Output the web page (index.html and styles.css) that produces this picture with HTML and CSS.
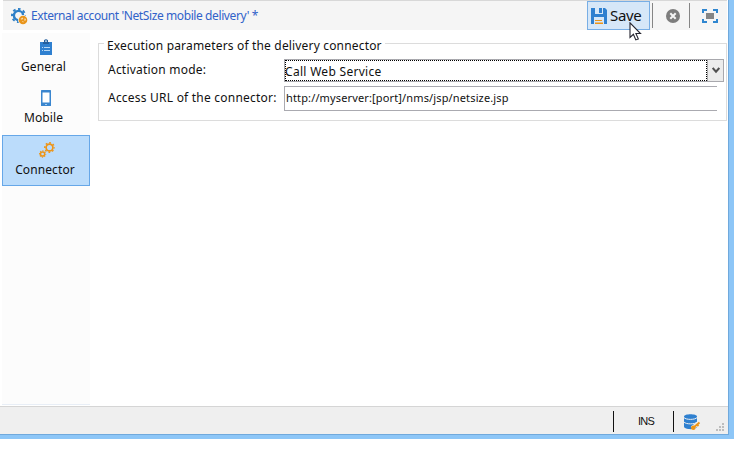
FILE: index.html
```html
<!DOCTYPE html>
<html lang="en">
<head>
<meta charset="utf-8">
<title>External account</title>
<link rel="stylesheet" href="styles.css">
</head>
<body>
<div class="window">
  <header class="toolbar">
    <svg class="account-icon" width="17" height="17" viewBox="0 0 17 17">
      <circle cx="7.500" cy="7.500" r="4.600" fill="none" stroke="#2f80c8" stroke-width="2.400"/>
      <circle cx="7.500" cy="7.500" r="6.500" fill="none" stroke="#2f80c8" stroke-width="2" stroke-dasharray="2.600 2.505" stroke-dashoffset="1.300"/>
      <circle cx="12" cy="12" r="5" fill="#f5f5f5"/>
      <circle cx="12" cy="12" r="4.300" fill="#e8941a"/>
      <path d="M9.500 11l2-1.500.8 1-1.300 1.200zM13.300 10.500l1.500.3v1.500l-1.300.8zM11 13l1.500.3-.3 1.500z" fill="#fbdcae"/>
    </svg>
    <span class="title">External account 'NetSize mobile delivery' *</span>
    <button class="save">
      <svg width="16" height="16" viewBox="0 0 16 16">
        <path d="M0 0h14l2 2v14H0z" fill="#2f80d0"/>
        <path d="M4 0h8v6H4z" fill="#d6e7f8"/><path d="M8 0h3v5H8z" fill="#2f80d0"/>
        <path d="M3 9h10v7H3z" fill="#d6e7f8"/>
        <path d="M4 12h7v1H4zM4 14.500h8v1.500H4z" fill="#ed9518"/>
      </svg>
      <span>Save</span>
    </button>
    <i class="divider first"></i>
    <svg class="close" width="14" height="14" viewBox="0 0 14 14">
      <circle cx="7" cy="7" r="7" fill="#7d7d7d"/>
      <path d="M4.300 4.300l5.400 5.400M9.700 4.300l-5.400 5.400" stroke="#f5f5f5" stroke-width="2"/>
    </svg>
    <i class="divider second"></i>
    <svg class="expand" width="16" height="14" viewBox="0 0 16 14">
      <path d="M1 4V1h4M11 1h4v3M15 10v3h-4M5 13H1v-3" fill="none" stroke="#2f86d0" stroke-width="2"/>
      <path d="M4 4h8v6H4z" fill="#858585"/>
    </svg>
    <svg class="cursor" width="13" height="20" viewBox="0 0 13 20">
      <path d="M1 .8v14.700l3.400-3.200 2.400 5.600 2.500-1-2.400-5.400h4.600z" fill="#fff" stroke="#24242f" stroke-width="1.100"/>
    </svg>
  </header>
  <div class="content">
    <nav class="tabs">
      <div class="tab general">
        <svg width="12" height="16" viewBox="0 0 12 16">
          <path d="M0 3h12v13H0z" fill="#2f80d0"/>
          <path d="M3 5V3h1V1.200Q6-.8 8 1.200V3h1v2z" fill="#245f9d"/>
          <path d="M5 1.500h2v1.300H5z" fill="#c9dff4"/>
          <path d="M2 8h1v1H2zM4 8h6v1H4zM2 11h1v1H2zM4 11h6v1H4z" fill="#b8d8f4"/>
        </svg>
        <span>General</span>
      </div>
      <div class="tab mobile">
        <svg width="10" height="16" viewBox="0 0 10 16">
          <rect width="10" height="16" rx=".5" fill="#3a86cf"/>
          <path d="M1.500 2.500h7v10h-7z" fill="#fff"/><path d="M4 14h2v1H4z" fill="#a9cff0"/>
        </svg>
        <span>Mobile</span>
      </div>
      <div class="tab connector">
        <svg width="16" height="16" viewBox="0 0 16 16" fill="none" stroke="#ed9518">
          <circle cx="10.500" cy="5.500" r="3.400" stroke-width="1.700"/>
          <circle cx="10.500" cy="5.500" r="4.700" stroke-width="1.500" stroke-dasharray="1.800 1.891" stroke-dashoffset=".9"/>
          <circle cx="3.600" cy="12" r="2.100" stroke-width="1.500"/>
          <circle cx="3.600" cy="12" r="3.100" stroke-width="1.100" stroke-dasharray="1.200 1.235" stroke-dashoffset=".6"/>
        </svg>
        <span>Connector</span>
      </div>
    </nav>
    <main>
      <fieldset>
        <legend>Execution parameters of the delivery connector</legend>
        <div class="row">
          <label class="mode">Activation mode:</label>
          <div class="select"><div class="value">Call Web Service</div>
            <div class="arrow"><svg width="8" height="7" viewBox="0 0 8 7"><path d="M.7 1L4 4.700 7.300 1" fill="none" stroke="#505050" stroke-width="2"/></svg></div>
          </div>
        </div>
        <div class="row url-row">
          <label class="address">Access URL of the connector:</label>
          <div class="input"><span>http://myserver:[port]/nms/jsp/netsize.jsp</span></div>
        </div>
      </fieldset>
    </main>
  </div>
  <footer class="status">
    <div class="ins"><span>INS</span></div>
    <svg class="database" width="17" height="17" viewBox="0 0 17 17">
      <path d="M0 2.500C0-.5 13-.5 13 2.500v10c0 3.500-13 3.500-13 0z" fill="#2f80d0"/>
      <path d="M0 3.500c1.500 2.500 11.500 2.500 13 0M0 8c1.500 2.500 11.500 2.500 13 0" fill="none" stroke="#efefef" stroke-width="1"/>
      <path d="M8 14l8-6" fill="none" stroke="#efefef" stroke-width="4"/>
      <circle cx="9.300" cy="13.800" r="2.300" fill="#ed9518"/>
      <path d="M9.500 13.500L15.500 8.500M13 10.500l1.500 1.500" stroke="#ed9518" stroke-width="1.900"/>
    </svg>
    <svg class="grip" width="8" height="8" viewBox="0 0 8 8" fill="#bdbdbd"><path d="M6 0h2v2H6zM3 3h2v2H3zM6 3h2v2H6zM0 6h2v2H0zM3 6h2v2H3zM6 6h2v2H6z"/></svg>
  </footer>
</div>
</body>
</html>
```
FILE: styles.css
```css
* { box-sizing: border-box; }
body { margin: 0; background: #fff; overflow: hidden; color: #111; font: 12px/16px "Noto Sans", "Open Sans", sans-serif; }
svg { display: block; flex: none; }
span, label, legend { white-space: nowrap; }
.window { width: 734px; height: 439px; display: flex; flex-direction: column; border-right: 5px solid #8dc6f7; border-bottom: 4px solid #8dc6f7; box-shadow: inset -1px -1px #70a9dc; padding: 0 1px 1px 0; }
.toolbar { position: relative; flex: none; height: 30px; margin-left: 3px; width: 724px; display: flex; align-items: center; background: #f5f5f5; border-top: 1px solid #d8d8d8; }
.account-icon { margin-left: 8px; margin-top: 2px; }
.title { margin-left: 3px; margin-top: 1px; color: #3162c9; font-size: 12px; letter-spacing: -.4px; width: 556px; }
.save { flex: none; width: 63px; height: 29px; padding: 0 0 0 3px; border: 1px solid #78aee5; background: #d6e7f8; display: flex; align-items: center; gap: 3px; font: 15px/18px "Noto Sans", sans-serif; letter-spacing: -.3px; color: #111; }
.save span { margin-top: -1px; }
.divider { flex: none; width: 1px; height: 25px; background: #858585; }
.first { margin-left: 2px; }
.close { margin-left: 13px; margin-top: 1px; }
.second { margin-left: 9px; }
.expand { margin-left: 12px; margin-top: 1px; }
.cursor { position: absolute; left: 626px; top: 21px; }
.content { flex: 1; min-height: 0; display: flex; padding: 3px 0 0 2px; }
.tabs { flex: none; width: 88px; height: 372px; background: #fcfcfc; border-bottom: 1px solid #e8eef6; }
.tab { height: 51px; display: flex; flex-direction: column; align-items: center; padding-top: 6px; letter-spacing: .1px; }
.tab span { margin-top: 4px; }
.general span, .mobile span { margin-left: -5px; }
.connector { border: 1px solid #66a7e8; background: #bbdcfb; }
.connector svg { margin-left: 2px; }
.connector span { margin-left: -2px; }
main { flex: 1; padding: 10px 1px 0 8px; }
fieldset { position: relative; width: 629px; height: 78px; margin: 0; border: 1px solid #dcdcdc; padding: 15px 0 0 9px; }
legend { position: absolute; left: 5px; top: -6px; padding: 0 3px; background: #fff; line-height: 16px; letter-spacing: .17px; }
.row { display: flex; height: 23px; letter-spacing: .22px; }
.row label { flex: none; width: 176px; padding-top: 3px; }
.url-row label { padding-top: 4px; }
.select { width: 440px; height: 23px; display: flex; border: 1px solid #a8a8ad; }
.value { flex: 1; border: 1px dotted #000; padding: 3px 0 0; line-height: 16px; text-indent: -1px; letter-spacing: .3px; }
.arrow { width: 16px; background: #ececec; border-left: 1px solid #aaa; display: flex; align-items: center; justify-content: center; }
.url-row { margin-top: 4px; height: 25px; }
.input { width: 433px; height: 25px; border: 1px solid #aaaab0; border-right: 0; padding: 3px 0 0 1px; font-size: 11px; line-height: 15px; letter-spacing: .14px; }
.status { flex: none; height: 28px; display: flex; align-items: center; background: #efefef; border-top: 1px solid #d5d5d5; padding-left: 613px; }
.ins { width: 61px; height: 21px; border-left: 1px solid #111; border-right: 1px solid #111; font: 11px/21px "Liberation Sans", sans-serif; letter-spacing: -.7px; padding-left: 24px; margin-top: 1px; }
.database { margin-left: 10px; margin-top: 3px; }
.grip { margin-left: 15px; margin-top: 13px; }
```
